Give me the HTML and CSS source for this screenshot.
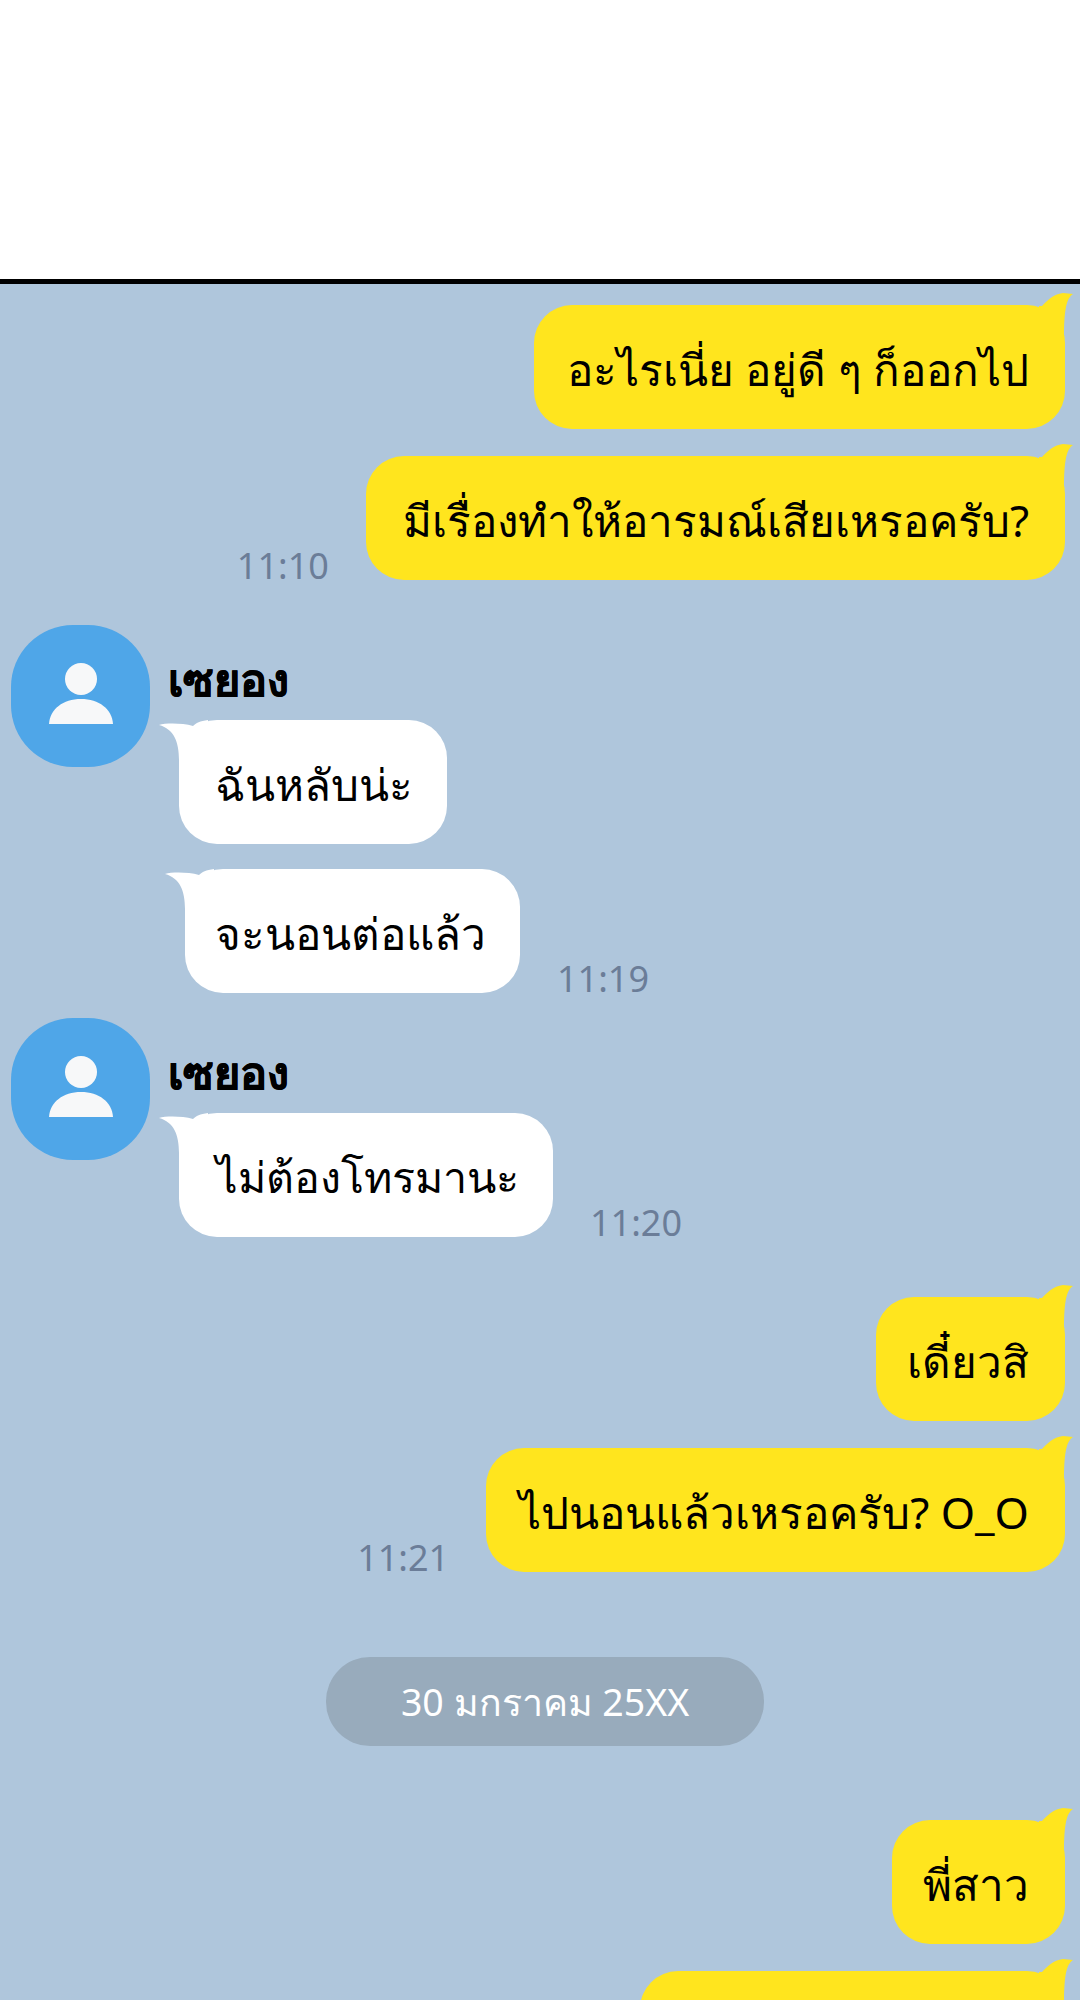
FILE: index.html
```html
<!DOCTYPE html>
<html>
    <head lang="th">
        <meta name="viewport" content="width=device-width, initial-scale=1" />
        <title>Chat</title>
        <link rel="stylesheet" href="styles.css">
    </head>
    <body>
        <svg class="defs" width="0" height="0">
            <symbol id="tail-me" viewBox="0 0 36 46">
                <path d="M3 13 C8 8 14 1 24 0 L34 1 C28 5 25 14 25 46 L0 46 L0 13 Z" />
            </symbol>
            <symbol id="tail-other" viewBox="0 0 50 40">
                <path d="M1 5 C8 3 24 3 35 6 C38 3 42 1 50 0 L50 40 L21 40 C21 22 16 9 1 5 Z" />
            </symbol>
            <symbol id="person" viewBox="0 0 64 61">
                <circle cx="32" cy="16" r="16" />
                <path d="M0 61 C1 46 14 36 32 36 C50 36 63 46 64 61 Z" />
            </symbol>
        </svg>
        <div class="top-space"></div>
        <div class="chat">
            <div class="row me row-first">
                <div class="bubble yellow">อะไรเนี่ย อยู่ดี ๆ ก็ออกไป<svg class="tail tail-right"><use href="#tail-me"/></svg></div>
            </div>
            <div class="row me row-next">
                <span class="time">11:10</span>
                <div class="bubble yellow wide-pad">มีเรื่องทำให้อารมณ์เสียเหรอครับ?<svg class="tail tail-right"><use href="#tail-me"/></svg></div>
            </div>

            <div class="sender sender-first">
                <div class="avatar"><svg class="person"><use href="#person"/></svg></div>
                <div class="sender-body">
                    <div class="name">เซยอง</div>
                    <div class="row">
                        <div class="bubble white">ฉันหลับน่ะ<svg class="tail tail-left"><use href="#tail-other"/></svg></div>
                    </div>
                    <div class="row row-gap shifted">
                        <div class="bubble white">จะนอนต่อแล้ว<svg class="tail tail-left"><use href="#tail-other"/></svg></div>
                        <span class="time">11:19</span>
                    </div>
                </div>
            </div>

            <div class="sender sender-second">
                <div class="avatar"><svg class="person"><use href="#person"/></svg></div>
                <div class="sender-body">
                    <div class="name">เซยอง</div>
                    <div class="row">
                        <div class="bubble white tight">ไม่ต้องโทรมานะ<svg class="tail tail-left"><use href="#tail-other"/></svg></div>
                        <span class="time">11:20</span>
                    </div>
                </div>
            </div>

            <div class="row me row-third">
                <div class="bubble yellow short-pad">เดี๋ยวสิ<svg class="tail tail-right"><use href="#tail-me"/></svg></div>
            </div>
            <div class="row me row-next">
                <span class="time">11:21</span>
                <div class="bubble yellow">ไปนอนแล้วเหรอครับ? O_O<svg class="tail tail-right"><use href="#tail-me"/></svg></div>
            </div>

            <div class="date-row"><div class="date-pill">30 มกราคม 25XX</div></div>

            <div class="row me row-after-date">
                <div class="bubble yellow short-pad">พี่สาว<svg class="tail tail-right"><use href="#tail-me"/></svg></div>
            </div>
            <div class="row me row-next">
                <div class="bubble yellow bubble-cut"><svg class="tail tail-right"><use href="#tail-me"/></svg></div>
            </div>
        </div>
    </body>
</html>
```

FILE: styles.css
```css
body {
    margin: 0;
    background-color: #fff;
    font-family: "Noto Sans", "DejaVu Sans", sans-serif;
}

.defs {
    display: block;
    height: 0;
}

.top-space {
    height: 279px;
}

.chat {
    height: 1716px;
    overflow: hidden;
    border-top: 5px solid #000;
    background-color: #afc6dc;
}

.row {
    display: flex;
    align-items: flex-end;
    gap: 37px;
}

.me {
    justify-content: flex-end;
    padding-right: 15px;
}

.row-first {
    margin-top: 21px;
}

.row-next {
    margin-top: 27px;
}

.row-gap {
    margin-top: 25px;
}

.row-third {
    margin-top: 60px;
}

.row-after-date {
    margin-top: 74px;
}

.bubble {
    position: relative;
    box-sizing: border-box;
    height: 124px;
    padding: 4px 36px 0;
    line-height: 120px;
    border-radius: 38px;
    font-size: 44px;
    color: #000;
    white-space: nowrap;
}

.yellow {
    padding-left: 33px;
    background-color: #ffe51e;
    fill: #ffe51e;
}

.yellow.wide-pad {
    padding-left: 37px;
}

.yellow.short-pad {
    padding-left: 31px;
}

.white {
    padding-right: 34px;
    background-color: #fff;
    fill: #fff;
    margin-left: 11px;
}

.white.tight {
    padding-left: 37px;
    font-size: 43px;
}

.shifted .white {
    padding-left: 30px;
    margin-left: 17px;
}

.bubble-cut {
    width: 425px;
}

.tail {
    position: absolute;
    overflow: visible;
}

.tail-right {
    top: -12px;
    right: -10px;
    width: 36px;
    height: 46px;
}

.tail-left {
    top: 0;
    left: -21px;
    width: 50px;
    height: 40px;
}

.time {
    font-size: 36px;
    line-height: 28px;
    color: #6b7d98;
}

.sender {
    display: flex;
    gap: 18px;
    padding-left: 11px;
}

.sender-first {
    margin-top: 45px;
}

.sender-second {
    margin-top: 25px;
}

.avatar {
    display: flex;
    justify-content: center;
    flex-shrink: 0;
    width: 139px;
    height: 142px;
    border-radius: 62px;
    background-color: #4fa6e8;
}

.person {
    width: 64px;
    height: 61px;
    margin-top: 38px;
    fill: #f7f8f9;
}

.name {
    margin-top: 29px;
    height: 66px;
    line-height: 50px;
    font-size: 45px;
    font-weight: 700;
    -webkit-text-stroke: 0.6px #000;
    color: #000;
}

.date-row {
    display: flex;
    justify-content: center;
    margin-top: 85px;
    padding-left: 10px;
}

.date-pill {
    width: 438px;
    height: 89px;
    line-height: 89px;
    border-radius: 44px;
    background-color: #98abbc;
    color: #fff;
    font-size: 37.5px;
    text-align: center;
}
```
